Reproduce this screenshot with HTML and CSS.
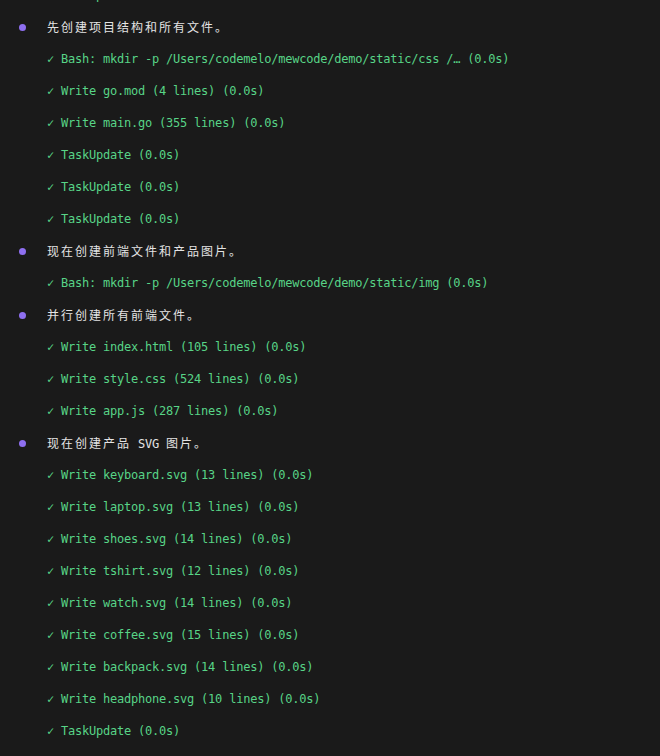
FILE: index.html
```html
<!DOCTYPE html>
<html lang="zh">
<head>
<meta charset="utf-8">
<link rel="stylesheet" href="styles.css">
</head>
<body>
<div class="log">
  <div class="row tool"><span class="txt"><span class="ok">✓</span> TaskUpdate (0.0s)</span></div>
  <div class="row msg"><span class="dot"></span><span class="txt cjk">先创建项目结构和所有文件。</span></div>
  <div class="row tool"><span class="txt"><span class="ok">✓</span> Bash: mkdir -p /Users/codemelo/mewcode/demo/static/css /… (0.0s)</span></div>
  <div class="row tool"><span class="txt"><span class="ok">✓</span> Write go.mod (4 lines) (0.0s)</span></div>
  <div class="row tool"><span class="txt"><span class="ok">✓</span> Write main.go (355 lines) (0.0s)</span></div>
  <div class="row tool"><span class="txt"><span class="ok">✓</span> TaskUpdate (0.0s)</span></div>
  <div class="row tool"><span class="txt"><span class="ok">✓</span> TaskUpdate (0.0s)</span></div>
  <div class="row tool"><span class="txt"><span class="ok">✓</span> TaskUpdate (0.0s)</span></div>
  <div class="row msg"><span class="dot"></span><span class="txt cjk">现在创建前端文件和产品图片。</span></div>
  <div class="row tool"><span class="txt"><span class="ok">✓</span> Bash: mkdir -p /Users/codemelo/mewcode/demo/static/img (0.0s)</span></div>
  <div class="row msg"><span class="dot"></span><span class="txt cjk">并行创建所有前端文件。</span></div>
  <div class="row tool"><span class="txt"><span class="ok">✓</span> Write index.html (105 lines) (0.0s)</span></div>
  <div class="row tool"><span class="txt"><span class="ok">✓</span> Write style.css (524 lines) (0.0s)</span></div>
  <div class="row tool"><span class="txt"><span class="ok">✓</span> Write app.js (287 lines) (0.0s)</span></div>
  <div class="row msg"><span class="dot"></span><span class="txt"><span class="cjk">现在创建产品</span> SVG <span class="cjk">图片。</span></span></div>
  <div class="row tool"><span class="txt"><span class="ok">✓</span> Write keyboard.svg (13 lines) (0.0s)</span></div>
  <div class="row tool"><span class="txt"><span class="ok">✓</span> Write laptop.svg (13 lines) (0.0s)</span></div>
  <div class="row tool"><span class="txt"><span class="ok">✓</span> Write shoes.svg (14 lines) (0.0s)</span></div>
  <div class="row tool"><span class="txt"><span class="ok">✓</span> Write tshirt.svg (12 lines) (0.0s)</span></div>
  <div class="row tool"><span class="txt"><span class="ok">✓</span> Write watch.svg (14 lines) (0.0s)</span></div>
  <div class="row tool"><span class="txt"><span class="ok">✓</span> Write coffee.svg (15 lines) (0.0s)</span></div>
  <div class="row tool"><span class="txt"><span class="ok">✓</span> Write backpack.svg (14 lines) (0.0s)</span></div>
  <div class="row tool"><span class="txt"><span class="ok">✓</span> Write headphone.svg (10 lines) (0.0s)</span></div>
  <div class="row tool"><span class="txt"><span class="ok">✓</span> TaskUpdate (0.0s)</span></div>
</div>
</body>
</html>
```
FILE: styles.css
```css
html, body {
  margin: 0;
  padding: 0;
  background: #1a1a1a;
}
body {
  font-family: "DejaVu Sans Mono", "Noto Sans CJK SC", monospace;
  font-size: 12px;
  letter-spacing: -0.22px;
  overflow: hidden;
}
.log {
  margin-top: -21px;
  display: flex;
  flex-direction: column;
}
.row {
  height: 32px;
  display: flex;
  align-items: center;
  white-space: pre;
  padding-left: 47px;
}
.txt {
  line-height: 16px;
}
.tool {
  color: #58d487;
}
.msg {
  color: #e4e4e4;
  padding-left: 19px;
}
.dot {
  width: 7px;
  height: 7px;
  border-radius: 50%;
  background: #8e6ff0;
  margin-right: 21px;
  flex: none;
}
.cjk {
  font-family: "Noto Sans CJK SC", sans-serif;
  font-size: 12px;
  letter-spacing: 2px;
}
```
